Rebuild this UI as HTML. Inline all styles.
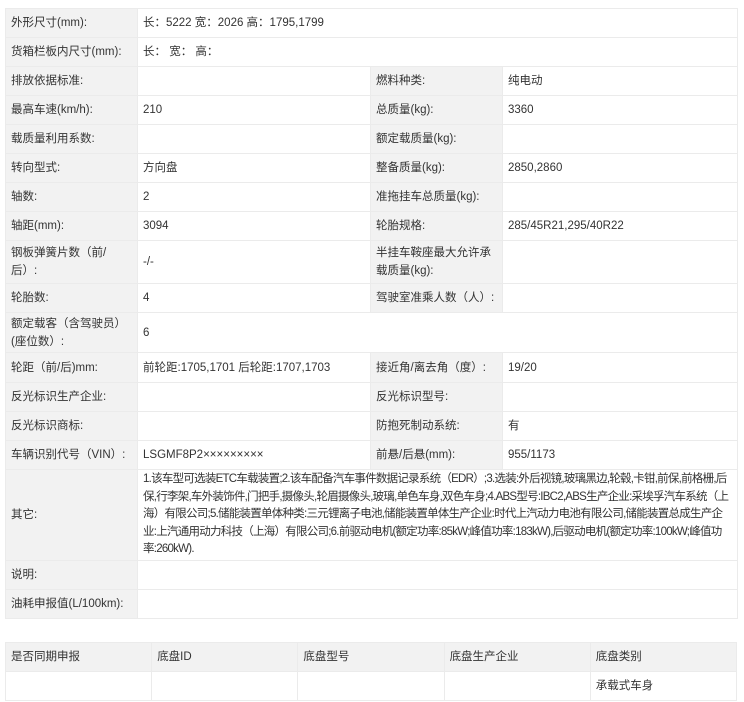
<!DOCTYPE html>
<html><head><meta charset="utf-8"><style>
body{margin:0;background:#fff;font-family:"Liberation Sans","Noto Sans CJK SC",sans-serif;font-size:11.5px;color:#333;}
table{border-collapse:collapse;table-layout:fixed;position:absolute;left:5px;}
td{border:1px solid #ebebeb;padding:0 0 0 5px;vertical-align:middle;line-height:18px;overflow:hidden;}
td.l{background:#f2f2f2;}
#t1{top:8px;width:732px;}
#t2{top:642px;width:732px;}
#t2 tr.h td{background:#f2f2f2;}
td.o{letter-spacing:-0.75px;line-height:17.5px;padding-right:2px;}
</style></head><body>
<table id="t1">
<colgroup><col style="width:132px"><col style="width:233px"><col style="width:132px"><col style="width:235px"></colgroup>
<tr style="height:29px"><td class="l">外形尺寸(mm):</td><td colspan="3">长：5222 宽：2026 高：1795,1799</td></tr>
<tr style="height:29px"><td class="l">货箱栏板内尺寸(mm):</td><td colspan="3">长： 宽： 高：</td></tr>
<tr style="height:29px"><td class="l">排放依据标准:</td><td></td><td class="l">燃料种类:</td><td>纯电动</td></tr>
<tr style="height:29px"><td class="l">最高车速(km/h):</td><td>210</td><td class="l">总质量(kg):</td><td>3360</td></tr>
<tr style="height:29px"><td class="l">载质量利用系数:</td><td></td><td class="l">额定载质量(kg):</td><td></td></tr>
<tr style="height:29px"><td class="l">转向型式:</td><td>方向盘</td><td class="l">整备质量(kg):</td><td>2850,2860</td></tr>
<tr style="height:29px"><td class="l">轴数:</td><td>2</td><td class="l">准拖挂车总质量(kg):</td><td></td></tr>
<tr style="height:29px"><td class="l">轴距(mm):</td><td>3094</td><td class="l">轮胎规格:</td><td>285/45R21,295/40R22</td></tr>
<tr style="height:43px"><td class="l">钢板弹簧片数（前/<br>后）:</td><td>-/-</td><td class="l">半挂车鞍座最大允许承载质量(kg):</td><td></td></tr>
<tr style="height:29px"><td class="l">轮胎数:</td><td>4</td><td class="l">驾驶室准乘人数（人）:</td><td></td></tr>
<tr style="height:40px"><td class="l">额定载客（含驾驶员）(座位数）:</td><td colspan="3">6</td></tr>
<tr style="height:30px"><td class="l">轮距（前/后)mm:</td><td>前轮距:1705,1701 后轮距:1707,1703</td><td class="l">接近角/离去角（度）:</td><td>19/20</td></tr>
<tr style="height:29px"><td class="l">反光标识生产企业:</td><td></td><td class="l">反光标识型号:</td><td></td></tr>
<tr style="height:29px"><td class="l">反光标识商标:</td><td></td><td class="l">防抱死制动系统:</td><td>有</td></tr>
<tr style="height:29px"><td class="l">车辆识别代号（VIN）:</td><td>LSGMF8P2×××××××××</td><td class="l">前悬/后悬(mm):</td><td>955/1173</td></tr>
<tr style="height:91px"><td class="l">其它:</td><td colspan="3" class="o">1.该车型可选装ETC车载装置;2.该车配备汽车事件数据记录系统（EDR）;3.选装:外后视镜,玻璃黑边,轮毂,卡钳,前保,前格栅,后保,行李架,车外装饰件,门把手,摄像头,轮眉摄像头,玻璃,单色车身,双色车身;4.ABS型号:IBC2,ABS生产企业:采埃孚汽车系统（上海）有限公司;5.储能装置单体种类:三元锂离子电池,储能装置单体生产企业:时代上汽动力电池有限公司,储能装置总成生产企业:上汽通用动力科技（上海）有限公司;6.前驱动电机(额定功率:85kW;峰值功率:183kW),后驱动电机(额定功率:100kW;峰值功率:260kW).</td></tr>
<tr style="height:29px"><td class="l">说明:</td><td colspan="3"></td></tr>
<tr style="height:29px"><td class="l">油耗申报值(L/100km):</td><td colspan="3"></td></tr>
</table>
<table id="t2">
<tr class="h" style="height:29px"><td>是否同期申报</td><td>底盘ID</td><td>底盘型号</td><td>底盘生产企业</td><td>底盘类别</td></tr>
<tr style="height:29px"><td></td><td></td><td></td><td></td><td>承载式车身</td></tr>
</table>
</body></html>
